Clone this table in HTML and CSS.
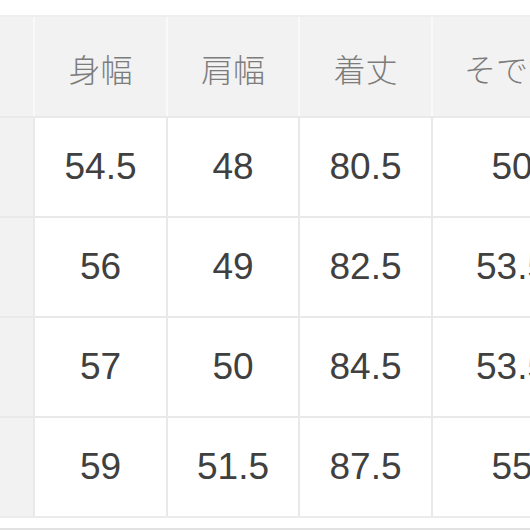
FILE: index.html
```html
<!DOCTYPE html>
<html lang="ja">
<head>
<meta charset="utf-8">
<title>サイズ表</title>
<link rel="stylesheet" href="styles.css">
</head>
<body>
<div class="page">
  <div class="table">
    <div class="row head">
      <div class="cell label"></div>
      <div class="cell">身幅</div>
      <div class="cell">肩幅</div>
      <div class="cell">着丈</div>
      <div class="cell">そで丈</div>
    </div>
    <div class="row">
      <div class="cell label"></div>
      <div class="cell">54.5</div>
      <div class="cell">48</div>
      <div class="cell">80.5</div>
      <div class="cell">50</div>
    </div>
    <div class="row">
      <div class="cell label"></div>
      <div class="cell">56</div>
      <div class="cell">49</div>
      <div class="cell">82.5</div>
      <div class="cell">53.5</div>
    </div>
    <div class="row">
      <div class="cell label"></div>
      <div class="cell">57</div>
      <div class="cell">50</div>
      <div class="cell">84.5</div>
      <div class="cell">53.5</div>
    </div>
    <div class="row">
      <div class="cell label"></div>
      <div class="cell">59</div>
      <div class="cell">51.5</div>
      <div class="cell">87.5</div>
      <div class="cell">55</div>
    </div>
  </div>
  <div class="rule"></div>
</div>
</body>
</html>
```
FILE: styles.css
```css
html, body {
  margin: 0;
  padding: 0;
  background: #ffffff;
}
body {
  width: 530px;
  height: 530px;
  overflow: hidden;
}
.page {
  padding-top: 15px;
  width: 640px;
}
.table {
  display: flex;
  flex-direction: column;
  gap: 2px;
  background: #e9e9e9;
  border-top: 2px solid #eeeeee;
  border-bottom: 2px solid #ebebeb;
}
.row {
  display: grid;
  grid-template-columns: 33px 131px 130px 131px 158px;
  column-gap: 2px;
  height: 98px;
  background: #e9e9e9;
}
.row.head {
  height: 99px;
  background: #f9f9f9;
}
.cell {
  display: flex;
  align-items: center;
  justify-content: center;
  background: #ffffff;
  color: #404040;
  font-family: "Liberation Sans", Arial, sans-serif;
  font-size: 37px;
  letter-spacing: 0;
}
.head .cell {
  background: #f2f2f2;
  color: #7c7c7c;
  font-family: "Noto Sans CJK JP", "Noto Sans", sans-serif;
  font-size: 32px;
  font-weight: 300;
  letter-spacing: 0;
  padding-top: 2px;
}
.cell.label {
  background: #f2f2f2;
}
.rule {
  margin-top: 10px;
  height: 2px;
  background: #e2e2e2;
}
```
